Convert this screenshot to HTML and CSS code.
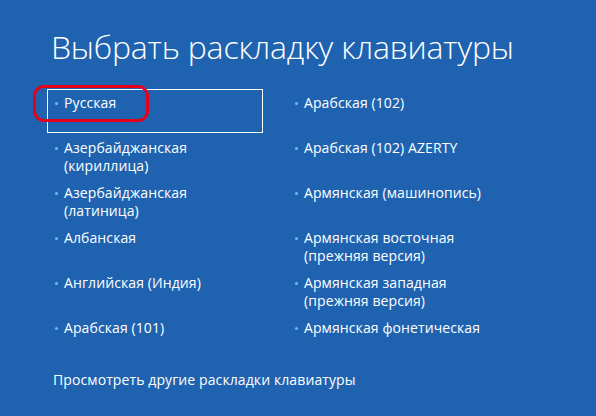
FILE: index.html
```html
<!DOCTYPE html>
<html lang="ru">
<head>
    <meta charset="utf-8">
    <title>Выбрать раскладку клавиатуры</title>
    <link rel="stylesheet" href="styles.css">
</head>
<body>
    <div class="screen">
        <h1 class="title">Выбрать раскладку клавиатуры</h1>
        <ul class="layouts">
            <li class="layout selected">
                <span class="name">Русская</span>
                <span class="mark"></span>
            </li>
            <li class="layout"><span class="name">Арабская (102)</span></li>
            <li class="layout"><span class="name">Азербайджанская<br>(кириллица)</span></li>
            <li class="layout"><span class="name">Арабская (102) AZERTY</span></li>
            <li class="layout"><span class="name">Азербайджанская<br>(латиница)</span></li>
            <li class="layout"><span class="name">Армянская (машинопись)</span></li>
            <li class="layout"><span class="name">Албанская</span></li>
            <li class="layout"><span class="name">Армянская восточная<br>(прежняя версия)</span></li>
            <li class="layout"><span class="name">Английская (Индия)</span></li>
            <li class="layout"><span class="name">Армянская западная<br>(прежняя версия)</span></li>
            <li class="layout"><span class="name">Арабская (101)</span></li>
            <li class="layout"><span class="name">Армянская фонетическая</span></li>
        </ul>
        <a class="more" href="#">Просмотреть другие раскладки клавиатуры</a>
    </div>
</body>
</html>
```

FILE: styles.css
```css
html, body {
    margin: 0;
    height: 100%;
}
body {
    background-color: #1f63b0;
    color: #fff;
    font-family: "Open Sans", "Noto Sans", sans-serif;
}
.screen {
    padding: 22px 0 0 47px;
}
.title {
    margin: 0 0 18px 4px;
    font-size: 32px;
    font-weight: 300;
    line-height: 49px;
    letter-spacing: -0.2px;
}
.layouts {
    list-style: none;
    margin: 0;
    padding: 0;
    display: grid;
    grid-template-columns: 216px 216px;
    grid-auto-rows: 45px;
    column-gap: 24px;
}
.layout {
    position: relative;
    box-sizing: border-box;
    padding: 4px 0 0 16px;
    font-size: 14px;
    line-height: 18px;
    letter-spacing: 0.1px;
    border: 1px solid transparent;
    height: 44px;
}
.layout::before {
    content: "";
    position: absolute;
    left: 7px;
    top: 12px;
    width: 3px;
    height: 3px;
    border-radius: 50%;
    background-color: #5cc4f5;
}
.selected {
    border-color: #fff;
}
.mark {
    position: absolute;
    left: -15px;
    top: -5px;
    width: 110px;
    height: 31px;
    border: 3px solid #e8001a;
    border-radius: 11px;
}
.more {
    display: inline-block;
    margin: 12px 0 0 6px;
    color: #fff;
    text-decoration: none;
    font-size: 14px;
    line-height: 18px;
    letter-spacing: 0.1px;
}
```
